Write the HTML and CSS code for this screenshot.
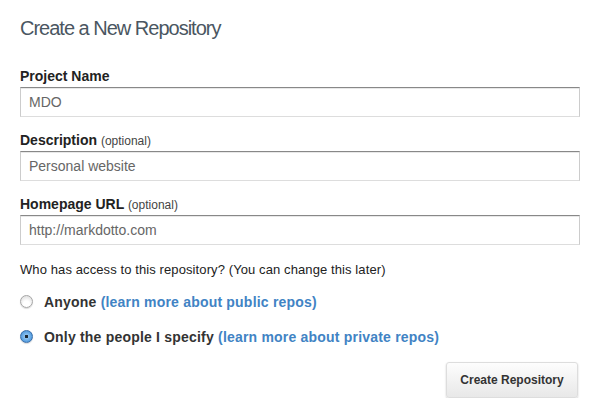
FILE: index.html
```
<!DOCTYPE html>
<html lang="en">
<head>
  <meta charset="UTF-8" />
  <title>Create a New Repository</title>
  <link rel="stylesheet" href="styles.css">
</head>
<body>

  <div class="page">
    <h1>Create a New Repository</h1>

    <form>
      <!-- Project name -->
      <div class="field">
        <label for="name">Project Name</label>
        <input type="text" id="name" value="MDO" />
      </div>

      <!-- Description -->
      <div class="field">
        <label for="desc">Description <span class="note">(optional)</span></label>
        <input type="text" id="desc" value="Personal website" />
      </div>

      <!-- Homepage -->
      <div class="field">
        <label for="url">Homepage URL <span class="note">(optional)</span></label>
        <input type="text" id="url" value="http://markdotto.com" />
      </div>

      <p class="access">Who has access to this repository? (You can change this later)</p>

      <label class="choice">
        <input type="radio" name="access" value="public" />
        <span>Anyone <a href="#">(learn more about public repos)</a></span>
      </label>
      <label class="choice">
        <input type="radio" name="access" value="private" checked />
        <span>Only the people I specify <a href="#">(learn more about private repos)</a></span>
      </label>

      <div class="actions">
        <button type="button">Create Repository</button>
      </div>
    </form>
  </div>

</body>
</html>
```

FILE: styles.css
```
body {
  margin: 0;
  background-color: #fff;
  font-family: "Liberation Sans", Arial, sans-serif;
  color: #333;
}

.page {
  width: 560px;
  padding: 15px 20px 0;
}

h1 {
  margin: 0 0 26px;
  font-size: 20px;
  line-height: 26px;
  font-weight: normal;
  color: #4a5661;
  letter-spacing: -1px;
}

.field {
  margin-bottom: 14px;
}

.field label {
  display: block;
  font-size: 14px;
  font-weight: bold;
  line-height: 18px;
  height: 18px;
  margin-bottom: 2px;
  color: #222;
}

.note {
  font-size: 12px;
  line-height: 1;
  font-weight: normal;
  color: #444;
}

.field input {
  box-sizing: border-box;
  display: block;
  width: 560px;
  height: 30px;
  margin: 0;
  padding: 0 8px;
  border: 1px solid #ccc;
  border-top-color: #888;
  border-bottom-color: #ddd;
  border-radius: 0;
  box-shadow: inset 0 1px 0 #e8e8e8;
  font-family: "Liberation Sans", Arial, sans-serif;
  font-size: 14px;
  color: #666;
  background-color: #fff;
}

.access {
  margin: 17px 0 6px;
  font-size: 13px;
  line-height: 16px;
  letter-spacing: 0.1px;
  color: #222;
}

.choice {
  display: flex;
  align-items: center;
  height: 35px;
  font-size: 14px;
  font-weight: bold;
  letter-spacing: 0.2px;
  color: #333;
}

.choice a {
  color: #4183c4;
  text-decoration: none;
}

.choice input {
  -webkit-appearance: none;
  appearance: none;
  box-sizing: border-box;
  width: 13px;
  height: 13px;
  margin: 0 11px 0 0;
  border: 1px solid #a6a6a6;
  border-radius: 50%;
  background: radial-gradient(circle at 50% 70%, #fff 30%, #e4e4e4 75%);
  box-shadow: 0 1px 1px rgba(0, 0, 0, 0.15);
}

.choice input:checked {
  border-color: #3a6ea8;
  background: radial-gradient(circle, #1b2733 0, #1b2733 18%, #8cc2f0 26%, #4d97dc 75%, #2f79c4 100%);
}

.actions {
  display: flex;
  justify-content: flex-end;
  margin-top: 8px;
}

button {
  width: 132px;
  height: 36px;
  margin-right: 2px;
  border: 1px solid #ddd;
  border-radius: 3px;
  background: linear-gradient(#fdfdfd, #e8e8e8);
  box-shadow: 0 1px 2px rgba(0, 0, 0, 0.2);
  font-family: "Liberation Sans", Arial, sans-serif;
  font-size: 12px;
  font-weight: bold;
  color: #333;
}
```
